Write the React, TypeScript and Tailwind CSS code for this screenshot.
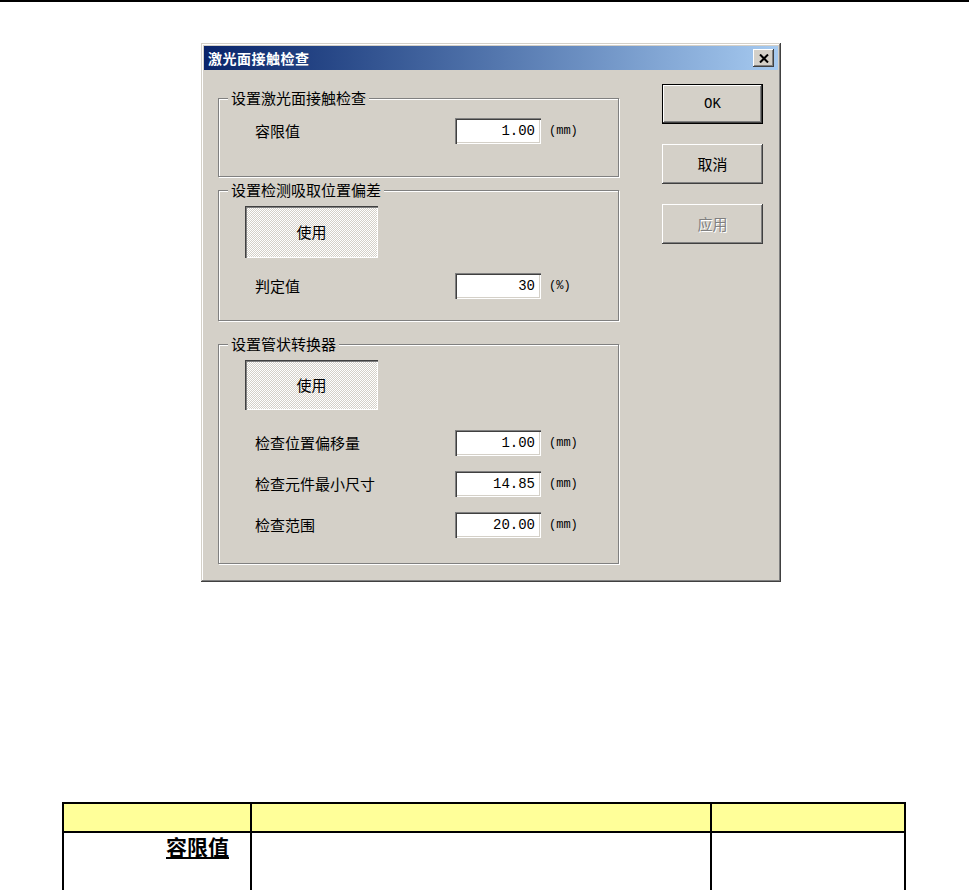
import { ReactNode } from "react";

const cjk = "font-['Noto_Sans_CJK_SC','Noto_Sans',sans-serif]";
const mono = "font-['Liberation_Mono',monospace]";

// classic 3D edges
const raised =
  "shadow-[inset_-1px_-1px_0_#404040,inset_1px_1px_0_#ffffff,inset_-2px_-2px_0_#808080,inset_2px_2px_0_#d4d0c8]";
const sunken =
  "shadow-[inset_1px_1px_0_#808080,inset_2px_2px_0_#404040,inset_-1px_-1px_0_#ffffff,inset_-2px_-2px_0_#d4d0c8]";
const pressed =
  "shadow-[inset_1px_1px_0_#404040,inset_2px_2px_0_#808080,inset_-1px_-1px_0_#ffffff]";

interface IGroup {
  title: string;
  className?: string;
  children?: ReactNode;
}

const GroupBox = ({ title, className, children }: IGroup) => {
  return (
    <div
      className={`relative border border-[#808080] shadow-[inset_1px_1px_0_#ffffff,1px_1px_0_#ffffff] ${className}`}
    >
      <span
        className={`absolute -top-[10px] left-[9px] bg-[#d4d0c8] px-[3px] text-[15px] leading-[18px] text-black ${cjk}`}
      >
        {title}
      </span>
      {children}
    </div>
  );
};

interface IField {
  label: string;
  value: string;
  unit: string;
  className?: string;
}

const Field = ({ label, value, unit, className }: IField) => {
  return (
    <div className={`flex items-center pl-[36px] ${className ?? ""}`}>
      <span className={`w-[200px] text-[15px] leading-[18px] text-black ${cjk}`}>{label}</span>
      <div
        className={`flex h-[26px] w-[86px] items-center justify-end bg-white pr-[6px] text-[14px] text-black ${sunken} ${mono}`}
      >
        {value}
      </div>
      <span className={`ml-[8px] text-[12px] text-black ${mono}`}>{unit}</span>
    </div>
  );
};

const UseButton = ({ height }: { height: string }) => {
  return (
    <div
      className={`ml-[26px] flex w-[133px] items-center justify-center bg-[repeating-conic-gradient(#ffffff_0_25%,#d4d0c8_0_50%)] bg-[length:2px_2px] text-[15px] text-black ${pressed} ${cjk} ${height}`}
    >
      使用
    </div>
  );
};

const DlgButton = ({
  children,
  isDefault,
  disabled,
}: {
  children: ReactNode;
  isDefault?: boolean;
  disabled?: boolean;
}) => {
  return (
    <div
      className={`flex h-[40px] w-[101px] items-center justify-center bg-[#d4d0c8] ${
        isDefault ? "border border-black" : ""
      }`}
    >
      <div
        className={`flex h-full w-full items-center justify-center text-[15px] ${raised} ${
          disabled ? "text-[#808080] [text-shadow:1px_1px_0_#ffffff]" : "text-black"
        }`}
      >
        {children}
      </div>
    </div>
  );
};

const App = () => {
  return (
    <div className="min-h-[890px] overflow-hidden bg-white">
      <div className="h-[2px] bg-black" />

      <div className="pl-[201px] pt-[41px]">
        {/* dialog window */}
        <div
          className={`h-[539px] w-[580px] bg-[#d4d0c8] p-[3px] shadow-[inset_-1px_-1px_0_#404040,inset_1px_1px_0_#d4d0c8,inset_-2px_-2px_0_#808080,inset_2px_2px_0_#ffffff]`}
        >
          <div className="flex h-[24px] items-center justify-between bg-linear-to-r from-[#0a246a] to-[#a6caf0] pl-[4px] pr-[4px]">
            <span className={`text-[14px] font-bold leading-[24px] tracking-[0.5px] text-white ${cjk}`}>
              激光面接触检查
            </span>
            <div className={`flex h-[18px] w-[21px] items-center justify-center bg-[#d4d0c8] ${raised}`}>
              <svg width="10" height="9" viewBox="0 0 10 9">
                <path d="M1 0.5 L9 8.5 M9 0.5 L1 8.5" stroke="#000" strokeWidth="2" />
              </svg>
            </div>
          </div>

          <div className="flex pl-[14px]">
            <div className="mt-[28px] w-[401px]">
              <GroupBox title="设置激光面接触检查" className="h-[79px] w-[401px]">
                <Field label="容限值" value="1.00" unit="(mm)" className="mt-[19px]" />
              </GroupBox>

              <GroupBox title="设置检测吸取位置偏差" className="mt-[13px] h-[131px] w-[401px]">
                <div className="mt-[15px]">
                  <UseButton height="h-[52px]" />
                </div>
                <Field label="判定值" value="30" unit="(%)" className="mt-[15px]" />
              </GroupBox>

              <GroupBox title="设置管状转换器" className="mt-[23px] h-[220px] w-[401px]">
                <div className="mt-[15px]">
                  <UseButton height="h-[50px]" />
                </div>
                <Field label="检查位置偏移量" value="1.00" unit="(mm)" className="mt-[20px]" />
                <Field label="检查元件最小尺寸" value="14.85" unit="(mm)" className="mt-[15px]" />
                <Field label="检查范围" value="20.00" unit="(mm)" className="mt-[15px]" />
              </GroupBox>
            </div>

            <div className="ml-[43px] mt-[14px] flex flex-col gap-[20px]">
              <DlgButton isDefault>
                <span className={`${mono} text-[14px]`}>OK</span>
              </DlgButton>
              <DlgButton>
                <span className={cjk}>取消</span>
              </DlgButton>
              <DlgButton disabled>
                <span className={cjk}>应用</span>
              </DlgButton>
            </div>
          </div>
        </div>
      </div>

      {/* table below the screenshot */}
      <div className="ml-[62px] mt-[220px] w-[842px]">
        <table className="w-[842px] table-fixed border-collapse">
          <tbody>
            <tr className="h-[29px] bg-[#ffff99]">
              <td className="w-[188px] border-2 border-black" />
              <td className="w-[460px] border-2 border-black" />
              <td className="w-[194px] border-2 border-black" />
            </tr>
            <tr className="h-[80px]">
              <td className="border-2 border-black pr-[21px] pt-[1px] text-right align-top">
                <span className={`text-[21px] font-bold leading-[24px] text-black underline underline-offset-[2px] ${cjk}`}>
                  容限值
                </span>
              </td>
              <td className="border-2 border-black" />
              <td className="border-2 border-black" />
            </tr>
          </tbody>
        </table>
      </div>
    </div>
  );
};

export default App;
